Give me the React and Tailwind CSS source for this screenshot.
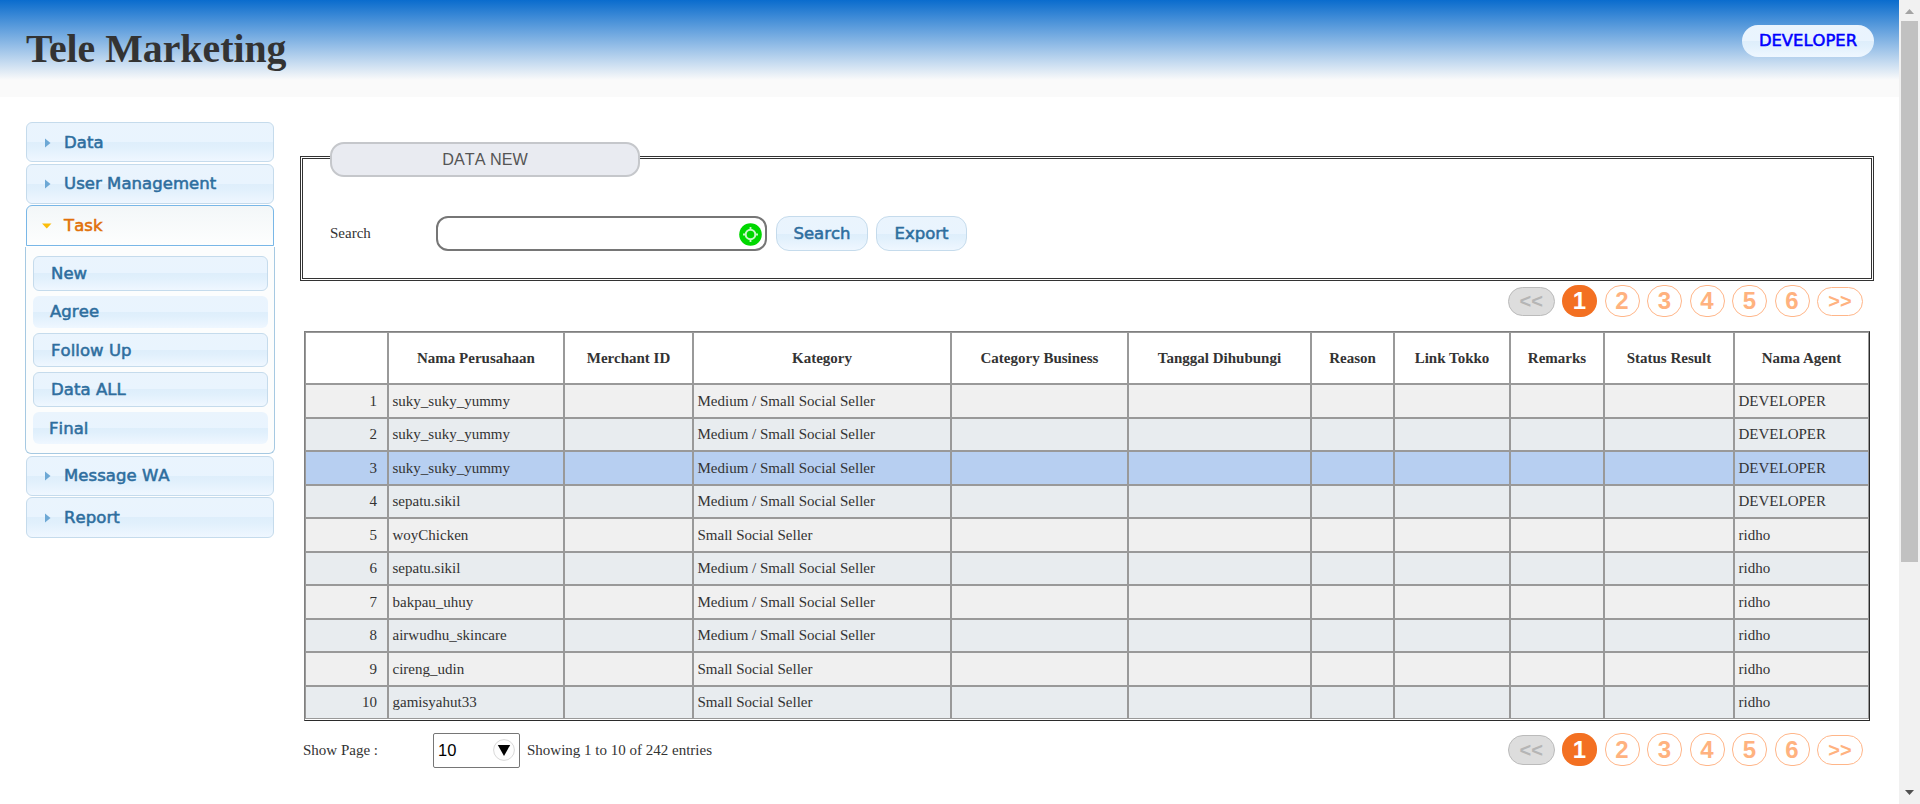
import React from 'react';

const GLASS =
  'bg-[linear-gradient(to_bottom,#eaf4fd_0%,#e9f4fe_50%,#deeefb_50%,#e1f0fc_65%,#eff7ff_100%)]';
const UI_FONT =
  "font-['DejaVu_Sans',sans-serif] font-normal [font-kerning:none] [-webkit-text-stroke:0.55px_currentColor]";

const COLUMNS = [
  ['', 'w-[83px]'],
  ['Nama Perusahaan', 'w-[176px]'],
  ['Merchant ID', 'w-[129px]'],
  ['Kategory', 'w-[258px]'],
  ['Category Business', 'w-[177px]'],
  ['Tanggal Dihubungi', 'w-[183px]'],
  ['Reason', 'w-[83px]'],
  ['Link Tokko', 'w-[116px]'],
  ['Remarks', 'w-[94px]'],
  ['Status Result', 'w-[130px]'],
  ['Nama Agent', 'w-[133px]'],
];

const BOTH = 'Medium / Small Social Seller';
const SMALL = 'Small Social Seller';

const ROWS = [
  ['suky_suky_yummy', BOTH, 'DEVELOPER'],
  ['suky_suky_yummy', BOTH, 'DEVELOPER'],
  ['suky_suky_yummy', BOTH, 'DEVELOPER'],
  ['sepatu.sikil', BOTH, 'DEVELOPER'],
  ['woyChicken', SMALL, 'ridho'],
  ['sepatu.sikil', BOTH, 'ridho'],
  ['bakpau_uhuy', BOTH, 'ridho'],
  ['airwudhu_skincare', BOTH, 'ridho'],
  ['cireng_udin', SMALL, 'ridho'],
  ['gamisyahut33', SMALL, 'ridho'],
];

function MenuHeader({ label, className = 'h-10' }) {
  return (
    <div
      className={`mx-px flex items-center rounded-[6px] border border-[#c5dbec] pl-[18px] text-[#2e6e9e] ${GLASS} ${className}`}
    >
      <svg className="mt-px w-[19px] shrink-0" height="10" viewBox="0 0 19 10">
        <path d="M0 0.5L5.5 5L0 9.5Z" fill="#6da8d5" />
      </svg>
      <span>{label}</span>
    </div>
  );
}

function SubItem({ label, className }) {
  return (
    <div className={`flex items-center rounded-[6px] text-[#2e6e9e] ${GLASS} ${className}`}>
      <span>{label}</span>
    </div>
  );
}

function Sidebar() {
  return (
    <nav
      className={`mt-[25px] ml-[25px] w-[250px] shrink-0 text-[16.5px] leading-5 tracking-[0.05px] ${UI_FONT}`}
    >
      <MenuHeader label="Data" className="h-10 pt-px" />
      <MenuHeader label="User Management" className="mt-0.5 h-10 pb-px" />
      <div className="mx-px mt-px flex h-[41px] items-center rounded-t-[6px] border border-[#79b7e7] bg-[linear-gradient(to_bottom,#f3f7f8,#fdfefe)] pl-[15px] text-[#e17009]">
        <svg className="w-[22px] shrink-0" height="6" viewBox="0 0 22 6">
          <path d="M0 0.5H9.5L4.75 5.5Z" fill="#fbbd0a" />
        </svg>
        <span>Task</span>
      </div>
      <div className="mt-px flex h-[207px] flex-col rounded-b-[6px] border border-t-0 border-[#a6c9e2] bg-[#fcfdfd] pt-[9px] pr-1.5 pl-[7px]">
        <SubItem label="New" className="h-[35px] border border-[#c5dbec] pl-[17px]" />
        <SubItem label="Agree" className="mt-[5px] h-8 pb-px pl-[17px]" />
        <SubItem
          label="Follow Up"
          className="mt-[5px] h-[34px] border border-[#c5dbec] pt-px pl-[17px]"
        />
        <SubItem label="Data ALL" className="mt-[5px] h-[35px] border border-[#c5dbec] pl-[17px]" />
        <SubItem label="Final" className="mt-[5px] h-8 pt-px pl-[16px]" />
      </div>
      <MenuHeader label="Message WA" className="mt-0.5 h-10 pb-px" />
      <MenuHeader label="Report" className="mt-px h-[41px]" />
    </nav>
  );
}

function Pagination({ small, large }) {
  return (
    <div className="flex items-center gap-[7.5px] font-['Liberation_Sans',Arial,sans-serif] font-bold">
      <span
        className={`flex w-[46.5px] items-center justify-center rounded-[15px] border border-[#bbb] bg-[#ddd] text-[20px] text-[#b5b5b5] ${small}`}
      >
        &lt;&lt;
      </span>
      <span
        className={`flex w-[35px] items-center justify-center rounded-[16px] bg-[#f37022] text-[24px] text-white ${large}`}
      >
        1
      </span>
      {[2, 3, 4, 5, 6].map((page) => (
        <span
          key={page}
          className={`flex w-[35px] items-center justify-center rounded-[16px] border border-[#ffb689] text-[24px] text-[#ffb27f] ${large}`}
        >
          {page}
        </span>
      ))}
      <span
        className={`flex w-[46px] items-center justify-center rounded-[15px] border border-[#ffb689] text-[20px] text-[#ffb27f] ${small}`}
      >
        &gt;&gt;
      </span>
    </div>
  );
}

function SearchPanel() {
  return (
    <fieldset className="relative mt-[59px] h-[125px] w-[1574px] border-3 border-double border-[#333] pl-[27px]">
      <div className="absolute top-[-17px] left-[27px] flex h-[35px] w-[310px] items-center justify-center rounded-[14px] border-2 border-[#c5c7cb] bg-[#e9ebf1] font-['Liberation_Sans',Arial,sans-serif] text-[16.2px] text-[#555] [font-kerning:none]">
        DATA NEW
      </div>
      <div className="mt-[57px] flex h-[35px] items-center">
        <span className="w-[106px]">Search</span>
        <div className="flex h-[35px] w-[331px] items-center rounded-[12px] border-2 border-[#767676] pr-[3px] pl-2">
          <input className="min-w-0 flex-1 outline-none" />
          <svg className="mt-0.5" width="23" height="23" viewBox="0 0 23 23" fill="none">
            <circle cx="11.5" cy="11.5" r="11.3" fill="#00d800" />
            <circle cx="11.5" cy="11.5" r="4.8" stroke="#c9f7c9" strokeWidth="2" />
            <path
              d="M11.5 4V7M11.5 16V19M4 11.5H7M16 11.5H19"
              stroke="#c9f7c9"
              strokeWidth="1.8"
            />
          </svg>
        </div>
        <button
          className={`ml-[9px] h-[35px] w-[92px] rounded-[13px] border border-[#c5dbec] pt-px text-[16.5px] text-[#2e6e9e] ${GLASS} ${UI_FONT}`}
        >
          Search
        </button>
        <button
          className={`ml-2 h-[35px] w-[91px] rounded-[13px] border border-[#c5dbec] pt-px text-[16.5px] text-[#2e6e9e] ${GLASS} ${UI_FONT}`}
        >
          Export
        </button>
      </div>
    </fieldset>
  );
}

function rowColor(index) {
  if (index === 2) return 'bg-[#b7cff1]';
  return index % 2 === 0 ? 'bg-[#f0f0f0]' : 'bg-[#e8ecef]';
}

function DataTable() {
  return (
    <div className="ml-1 w-[1566px] border border-t-[#808080] border-r-[#2b2b2b] border-b-[#2b2b2b] border-l-[#808080] pb-px">
      <div className="border border-[#999]">
        <table className="w-[1562px] table-fixed border-separate border-spacing-0">
          <thead>
            <tr className="h-[52px]">
              {COLUMNS.map(([title, width]) => (
                <th
                  key={title}
                  className={`border-r-2 border-b-2 border-[#999] p-0 text-center font-bold last:border-r-0 ${width}`}
                >
                  {title}
                </th>
              ))}
            </tr>
          </thead>
          <tbody>
            {ROWS.map(([name, category, agent], index) => {
              const last = index === ROWS.length - 1;
              const height = last ? 'h-[31px]' : index % 2 === 0 ? 'h-[34px]' : 'h-[33px]';
              const cells = [index + 1, name, '', category, '', '', '', '', '', '', agent];
              return (
                <tr key={index} className={`${height} ${rowColor(index)}`}>
                  {cells.map((value, column) => (
                    <td
                      key={column}
                      className={`border-[#999] pt-0 leading-5 last:border-r-0 ${index % 2 === 0 ? 'pb-0' : 'pb-px'} ${last ? 'border-r-2' : 'border-r-2 border-b-2'} ${
                        column === 0 ? 'pr-[10px] text-right' : 'pl-[3.5px] text-left'
                      }`}
                    >
                      {value}
                    </td>
                  ))}
                </tr>
              );
            })}
          </tbody>
        </table>
      </div>
    </div>
  );
}

function Scrollbar() {
  return (
    <div className="flex h-[804px] w-[21px] shrink-0 flex-col items-center bg-[#f1f1f1]">
      <svg className="mt-[9px] shrink-0" width="9" height="5" viewBox="0 0 9 5">
        <path d="M0 5L4.5 0L9 5Z" fill="#a3a3a3" />
      </svg>
      <div className="mt-[7px] h-[541px] w-[17px] bg-[#c1c1c1]" />
      <svg className="mt-[228px] shrink-0" width="9" height="5" viewBox="0 0 9 5">
        <path d="M0 0L4.5 5L9 0Z" fill="#505050" />
      </svg>
    </div>
  );
}

export default function App() {
  return (
    <div className="flex h-[804px] w-[1920px] overflow-hidden bg-white font-['Liberation_Serif','Times_New_Roman',serif] text-[15px] text-[#333]">
      <div className="w-[1899px]">
        <header className="flex h-[97px] items-start justify-between bg-[linear-gradient(to_bottom,#0a6ccd_0px,#fafafa_80px)] pr-[25px] pl-[26px]">
          <h1 className="mt-[26px] text-[39.8px] leading-[46px] font-bold">Tele Marketing</h1>
          <a
            className={`mt-[25px] flex h-8 w-[132px] items-center justify-center rounded-[16px] pt-px text-[16.4px] text-[#0000ff] ${GLASS} ${UI_FONT}`}
          >
            DEVELOPER
          </a>
        </header>
        <div className="flex">
          <Sidebar />
          <main className="ml-[25px] w-[1574px]">
            <SearchPanel />
            <div className="mt-1 mb-3.5 flex h-8 items-center justify-end pr-[11px]">
              <Pagination small="h-[29px]" large="h-8" />
            </div>
            <DataTable />
            <div className="mt-3 flex items-start justify-between pr-[11px] pl-[3px]">
              <div className="flex h-[35px] items-center">
                <span className="w-[130px]">Show Page :</span>
                <div className="flex h-[35px] w-[87px] items-center justify-between rounded-[2px] border border-[#767676] pr-1 pl-1 font-['Liberation_Sans',Arial,sans-serif] text-[16.5px] text-black">
                  <span>10</span>
                  <svg className="-mt-0.5" width="22" height="22" viewBox="0 0 22 22">
                    <circle cx="11" cy="11" r="10.4" fill="#fdfdfd" stroke="#d8d8d8" />
                    <path d="M4.8 6H17.2L11 17Z" fill="#000" />
                  </svg>
                </div>
                <span className="ml-[7px]">Showing 1 to 10 of 242 entries</span>
              </div>
              <Pagination small="h-[30px]" large="h-[33px]" />
            </div>
          </main>
        </div>
      </div>
      <Scrollbar />
    </div>
  );
}
